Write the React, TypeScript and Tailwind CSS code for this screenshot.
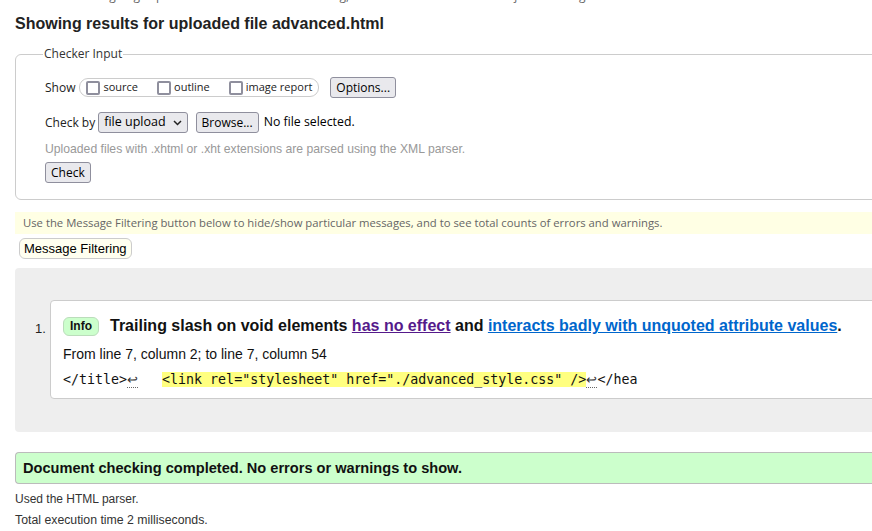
import React from "react";

const ui = { fontFamily: '"Open Sans", "Noto Sans", sans-serif' };
const arial = { fontFamily: '"Liberation Sans", Arial, sans-serif' };
const mono = { fontFamily: '"DejaVu Sans Mono", "Liberation Mono", monospace' };

function Btn({ children, className = "" }: { children: React.ReactNode; className?: string }) {
  return (
    <button
      className={
        "h-[21px] rounded-[3px] border border-[#8f8f9d] bg-[#e9e9ed] px-[5px] text-[12px] leading-none text-black " +
        className
      }
      style={ui}
    >
      {children}
    </button>
  );
}

function Box({ label }: { label: string }) {
  return (
    <label className="flex items-center gap-[3px]">
      <span className="h-[14px] w-[14px] rounded-[2px] border-2 border-[#8f8f9d] bg-white" />
      <span className="text-[11px]">{label}</span>
    </label>
  );
}

function Ret() {
  return (
    <span className="border-b border-dotted border-[#666] text-[12.5px] leading-none text-[#333]" style={arial}>
      ↩
    </span>
  );
}

export default function App() {
  return (
    <div className="h-[531px] w-[872px] overflow-hidden bg-white text-black" style={arial}>
      <div className="w-[900px] pl-[15px]">
        <p className="-mt-[10px] text-[12px] leading-[12px] text-[#666]" style={ui}>
          This tool is an ongoing experiment in better HTML checking, and its behavior remains subject to change
        </p>

        <h2 className="mt-[12px] text-[16px] font-bold leading-[20px] text-[#222]">
          Showing results for uploaded file advanced.html
        </h2>

        <fieldset
          className="mt-[11px] rounded-[6px] border border-[#ccc] pb-[16px] pl-[29px] pt-[4px]"
          style={ui}
        >
          <legend className="ml-[-2px] px-[1px] text-[12px] text-[#333]">Checker Input</legend>

          <div className="mt-[10px] flex items-center text-[12px] text-[#222]">
            <span>Show</span>
            <div className="ml-[4px] flex h-[19px] items-center gap-[19px] rounded-[9px] border border-[#ccc] pl-[6px] pr-[6px]">
              <Box label="source" />
              <Box label="outline" />
              <Box label="image report" />
            </div>
            <Btn className="ml-[11px]">Options...</Btn>
          </div>

          <div className="mt-[14px] flex items-center text-[12px] text-[#222]">
            <span>Check by</span>
            <span className="ml-[3px] flex h-[21px] items-center rounded-[3px] border border-[#8f8f9d] bg-[#e9e9ed] pl-[5px] pr-[5px] text-[12.5px] text-black">
              file upload
              <svg width="9" height="6" viewBox="0 0 9 6" className="ml-[7px]">
                <path d="M1 1l3.5 3.5L8 1" fill="none" stroke="#222" strokeWidth="1.5" />
              </svg>
            </span>
            <Btn className="ml-[8px]">Browse...</Btn>
            <span className="ml-[5px] text-[12.3px] text-black">No file selected.</span>
          </div>

          <p className="mt-[7px] text-[12.2px] text-[#999]" style={arial}>
            Uploaded files with .xhtml or .xht extensions are parsed using the XML parser.
          </p>

          <Btn className="mt-[4px]">Check</Btn>
        </fieldset>

        <p
          className="mt-[12px] bg-[#ffffe4] px-[8px] py-[3px] text-[11.3px] leading-[16px] text-[#666]"
          style={ui}
        >
          Use the Message Filtering button below to hide/show particular messages, and to see total counts of errors and warnings.
        </p>

        <button
          className="ml-[4px] mt-[4px] h-[21px] rounded-[6px] border border-[#ccc] bg-[#fffff0] px-[4px] text-[13px] leading-none text-black"
          style={arial}
        >
          Message Filtering
        </button>

        <div className="mt-[8px] rounded-l-[4px] bg-[#eee] pb-[33px] pl-[20px] pt-[32px]">
          <div className="flex">
            <span className="mt-[19px] w-[15px] text-[13px] text-[#222]">1.</span>
            <div className="flex-1 rounded-l-[4px] border border-[#ccc] bg-white pb-[9px] pl-[12px] pt-[15px]">
              <div className="flex items-center text-[16px] font-bold leading-[20px]">
                <span className="rounded-[6px] border border-[#bdb] bg-[#ccffcc] px-[6px] py-[1px] text-[12px] leading-[15px] text-[#111]">
                  Info
                </span>
                <span className="ml-[11px] whitespace-nowrap text-[#111]">
                  Trailing slash on void elements{" "}
                  <span className="text-[#551a8b] underline">has no effect</span> and{" "}
                  <span className="text-[#0066cc] underline">interacts badly with unquoted attribute values</span>.
                </span>
              </div>
              <p className="mt-[9px] text-[14px] leading-[18px] text-[#111]">
                From line 7, column 2; to line 7, column 54
              </p>
              <p className="mt-[8px] whitespace-pre text-[13.3px] leading-[18px] text-[#111]" style={mono}>
                {"</title>"}
                <Ret />
                {"   "}
                <span className="bg-[#ffff80]">{'<link rel="stylesheet" href="./advanced_style.css" />'}</span>
                <Ret />
                {"</hea"}
              </p>
            </div>
          </div>
        </div>

        <div className="mt-[20px] rounded-l-[4px] border border-r-0 border-[#bbb] bg-[#ccffcc] px-[7px] py-[6px] text-[14.6px] font-bold leading-[18px] text-[#111]">
          Document checking completed. No errors or warnings to show.
        </div>

        <p className="mt-[7px] text-[12px] leading-[16px] text-[#333]">Used the HTML parser.</p>
        <p className="mt-[5px] text-[12.3px] leading-[16px] text-[#333]">Total execution time 2 milliseconds.</p>
      </div>
    </div>
  );
}
